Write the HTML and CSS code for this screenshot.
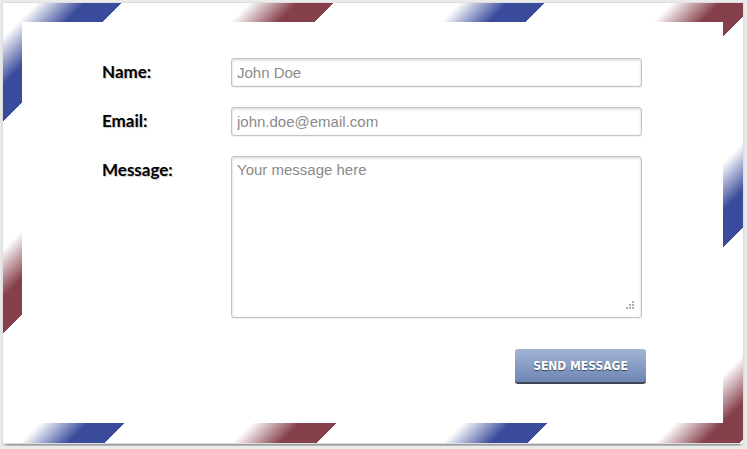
FILE: index.html
```html
<!DOCTYPE html>
<html lang="en">
<head>
    <meta charset="UTF-8">
    <meta name="viewport" content="width=device-width, initial-scale=1.0">
    <title>Contact - Airmail</title>
    <link rel="stylesheet" href="styles.css">
</head>
<body>
    <div class="envelope">
        <form class="letter" onsubmit="return false;">
            <div class="row">
                <label for="name">Name:</label>
                <input type="text" id="name" placeholder="John Doe">
            </div>
            <div class="row">
                <label for="email">Email:</label>
                <input type="email" id="email" placeholder="john.doe@email.com">
            </div>
            <div class="row">
                <label for="message">Message:</label>
                <div class="area">
                    <textarea id="message" placeholder="Your message here"></textarea>
                    <!-- resize grip dots -->
                    <svg class="grip" width="10" height="10" viewBox="0 0 10 10">
                        <g fill="#b0b0b0">
                            <rect x="7" y="1" width="2" height="2"/>
                            <rect x="4" y="4" width="2" height="2"/>
                            <rect x="7" y="4" width="2" height="2"/>
                            <rect x="1" y="7" width="2" height="2"/>
                            <rect x="4" y="7" width="2" height="2"/>
                            <rect x="7" y="7" width="2" height="2"/>
                        </g>
                    </svg>
                </div>
            </div>
            <div class="actions">
                <button type="submit">Send Message</button>
            </div>
        </form>
    </div>
</body>
</html>
```

FILE: styles.css
```css
body {
    margin: 0;
    background-color: #ebebeb;
}
.envelope {
    position: relative;
    width: 740px;
    height: 440px;
    margin: 3px;
    box-sizing: border-box;
    padding: 19px 20px 20px 19px;
    background-color: #fff;
    background-image: repeating-linear-gradient(135deg,
        rgba(59, 75, 155, 0) 0,
        rgba(59, 75, 155, 0) 24px,
        #3b4b9b 58px,
        #3b4b9b 84px,
        rgba(134, 64, 75, 0) 84px,
        rgba(134, 64, 75, 0) 174px,
        #86404b 208px,
        #86404b 234px,
        rgba(59, 75, 155, 0) 234px,
        rgba(59, 75, 155, 0) 299px);
    box-shadow: 0 0 0 1px #dedede, 0 4px 4px -2px rgba(0, 0, 0, 0.55);
}
.letter {
    background-color: #fff;
    height: 100%;
    box-sizing: border-box;
    padding: 36px 0 0 80px;
}
.row {
    display: flex;
    margin-bottom: 20px;
}
label {
    width: 129px;
    flex-shrink: 0;
    padding-top: 3px;
    font-family: Lato, "Open Sans", sans-serif;
    font-weight: bold;
    font-size: 17px;
    color: #000;
    text-shadow: 1px 1px 1px #c8c8c8;
}
input, textarea {
    width: 411px;
    box-sizing: border-box;
    border: 1px solid #c4c4c4;
    border-radius: 3px;
    padding: 4px 5px;
    font-family: "Liberation Sans", Arial, sans-serif;
    font-size: 15px;
    color: #333;
    box-shadow: inset 0 1px 3px rgba(0, 0, 0, 0.18), 0 1px 1px rgba(0, 0, 0, 0.06);
    outline: none;
}
input {
    height: 29px;
}
input::placeholder, textarea::placeholder {
    color: #8a8a8a;
}
.area {
    position: relative;
}
textarea {
    display: block;
    height: 162px;
    resize: none;
    padding: 4px 5px;
}
.grip {
    position: absolute;
    right: 7px;
    bottom: 8px;
}
.actions {
    display: flex;
    justify-content: flex-end;
    width: 544px;
    padding-top: 11px;
}
button {
    width: 131px;
    height: 35px;
    border: none;
    border-bottom: 2px solid #3f4552;
    border-radius: 3px;
    background: linear-gradient(#a3b5d5, #6e86b5);
    color: #fff;
    font-family: "DejaVu Sans Condensed", "DejaVu Sans", sans-serif;
    font-weight: bold;
    font-size: 12px;
    text-transform: uppercase;
    text-shadow: 0 1px 1px rgba(0, 0, 0, 0.55);
    cursor: pointer;
}
button:hover {
    background: linear-gradient(#95a9cc, #6079aa);
}
```
